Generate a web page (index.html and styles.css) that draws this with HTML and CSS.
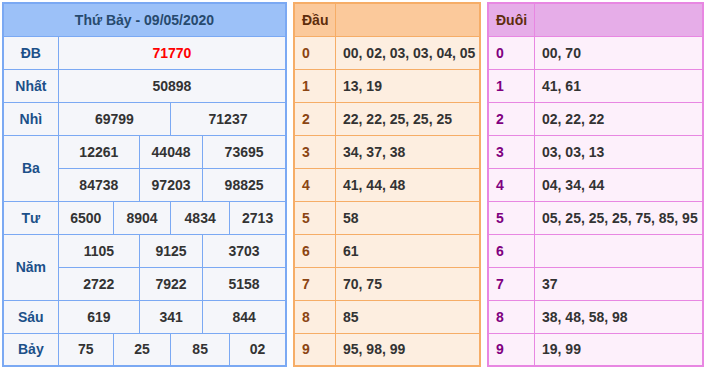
FILE: index.html
```html
<!DOCTYPE html>
<html lang="vi">
<head>
    <meta charset="UTF-8">
    <meta name="viewport" content="width=device-width, initial-scale=1.0">
    <title>Kết quả xổ số - Thứ Bảy 09/05/2020</title>
    <link rel="stylesheet" href="styles.css">
</head>
<body>

    <div class="wrap">
        <table class="kq">
            <colgroup>
                <col class="c-label">
                <col style="width: 55px">
                <col style="width: 26px">
                <col style="width: 31px">
                <col style="width: 32px">
                <col style="width: 27px">
                <col style="width: 56px">
            </colgroup>
            <thead>
                <tr><th colspan="7">Thứ Bảy - 09/05/2020</th></tr>
            </thead>
            <tbody>
                <tr>
                    <td class="label">ĐB</td>
                    <td colspan="6" class="db">71770</td>
                </tr>
                <tr>
                    <td class="label">Nhất</td>
                    <td colspan="6">50898</td>
                </tr>
                <tr>
                    <td class="label">Nhì</td>
                    <td colspan="3">69799</td>
                    <td colspan="3">71237</td>
                </tr>
                <tr>
                    <td class="label" rowspan="2">Ba</td>
                    <td colspan="2">12261</td>
                    <td colspan="2">44048</td>
                    <td colspan="2">73695</td>
                </tr>
                <tr>
                    <td colspan="2">84738</td>
                    <td colspan="2">97203</td>
                    <td colspan="2">98825</td>
                </tr>
                <tr>
                    <td class="label">Tư</td>
                    <td>6500</td>
                    <td colspan="2">8904</td>
                    <td colspan="2">4834</td>
                    <td>2713</td>
                </tr>
                <tr>
                    <td class="label" rowspan="2">Năm</td>
                    <td colspan="2">1105</td>
                    <td colspan="2">9125</td>
                    <td colspan="2">3703</td>
                </tr>
                <tr>
                    <td colspan="2">2722</td>
                    <td colspan="2">7922</td>
                    <td colspan="2">5158</td>
                </tr>
                <tr>
                    <td class="label">Sáu</td>
                    <td colspan="2">619</td>
                    <td colspan="2">341</td>
                    <td colspan="2">844</td>
                </tr>
                <tr>
                    <td class="label">Bảy</td>
                    <td>75</td>
                    <td colspan="2">25</td>
                    <td colspan="2">85</td>
                    <td>02</td>
                </tr>
            </tbody>
        </table>

        <table class="loto dau">
            <thead>
                <tr><th class="num">Đầu</th><th></th></tr>
            </thead>
            <tbody>
                <tr><td class="num">0</td><td>00, 02, 03, 03, 04, 05</td></tr>
                <tr><td class="num">1</td><td>13, 19</td></tr>
                <tr><td class="num">2</td><td>22, 22, 25, 25, 25</td></tr>
                <tr><td class="num">3</td><td>34, 37, 38</td></tr>
                <tr><td class="num">4</td><td>41, 44, 48</td></tr>
                <tr><td class="num">5</td><td>58</td></tr>
                <tr><td class="num">6</td><td>61</td></tr>
                <tr><td class="num">7</td><td>70, 75</td></tr>
                <tr><td class="num">8</td><td>85</td></tr>
                <tr><td class="num">9</td><td>95, 98, 99</td></tr>
            </tbody>
        </table>

        <table class="loto duoi">
            <thead>
                <tr><th class="num">Đuôi</th><th></th></tr>
            </thead>
            <tbody>
                <tr><td class="num">0</td><td>00, 70</td></tr>
                <tr><td class="num">1</td><td>41, 61</td></tr>
                <tr><td class="num">2</td><td>02, 22, 22</td></tr>
                <tr><td class="num">3</td><td>03, 03, 13</td></tr>
                <tr><td class="num">4</td><td>04, 34, 44</td></tr>
                <tr><td class="num">5</td><td>05, 25, 25, 25, 75, 85, 95</td></tr>
                <tr><td class="num">6</td><td></td></tr>
                <tr><td class="num">7</td><td>37</td></tr>
                <tr><td class="num">8</td><td>38, 48, 58, 98</td></tr>
                <tr><td class="num">9</td><td>19, 99</td></tr>
            </tbody>
        </table>
    </div>

</body>
</html>
```

FILE: styles.css
```css
body {
    margin: 0;
    background: #ffffff;
    font-family: 'Liberation Sans', Arial, sans-serif;
    font-size: 14px;
    font-weight: bold;
    color: #333333;
}

.wrap {
    display: flex;
    align-items: flex-start;
    gap: 6px;
    padding: 2px 0 0 2px;
}

table {
    border-collapse: collapse;
    table-layout: fixed;
}

table tr {
    height: 33px;
}

table th,
table td {
    padding: 0 7px;
    white-space: nowrap;
}

/* bang ket qua */
.kq {
    width: 285px;
    background-color: #f5f6fa;
    border: 2px solid #7ba9f3;
}

.kq .c-label {
    width: 55px;
}

.kq th {
    background-color: #9cc1f8;
    color: #274a6e;
    font-size: 14px;
    border: 1px solid #7ba9f3;
}

.kq td {
    text-align: center;
    border: 1px solid #7ba9f3;
    padding: 0;
}

.kq .label {
    color: #1c5089;
}

.kq .db {
    color: #ff0000;
}

/* bang loto */
.loto {
    text-align: left;
}

.dau {
    width: 188px;
    background-color: #fdeee0;
    border: 2px solid #f6ad67;
}

.dau .num {
    width: 26px;
}

.dau th,
.dau td {
    border: 1px solid #f6ad67;
}

.dau th {
    background-color: #fbc99b;
    color: #5e2d0c;
    text-align: left;
}

.dau td.num {
    color: #8b4513;
}

.duoi {
    width: 217px;
    background-color: #fdf0fb;
    border: 2px solid #e887e2;
}

.duoi .num {
    width: 31px;
}

.duoi th,
.duoi td {
    border: 1px solid #e887e2;
}

.duoi th {
    background-color: #e6ade8;
    color: #5e2d0c;
    text-align: left;
}

.duoi td.num {
    color: #800080;
}
```
